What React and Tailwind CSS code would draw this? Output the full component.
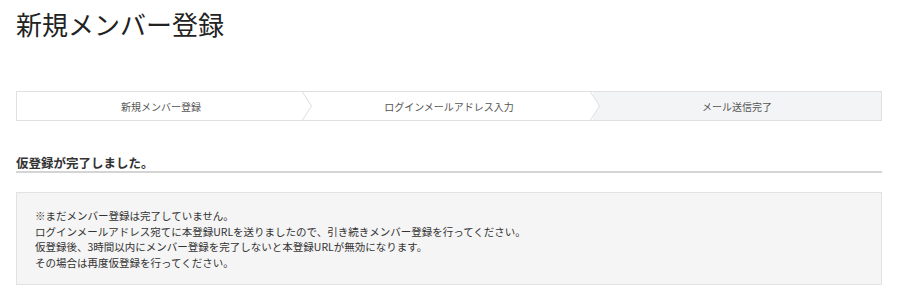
import React from 'react';

const steps = ['新規メンバー登録', 'ログインメールアドレス入力', 'メール送信完了'];

const Chevron = () => (
  <svg
    className="absolute top-0 -right-[7px] z-10"
    width="10"
    height="28"
    viewBox="0 0 10 28"
  >
    <polygon points="0,0 0.5,0 9.5,14 0.5,28 0,28" fill="#ffffff" />
    <polyline points="0.5,0 9.5,14 0.5,28" fill="none" stroke="#dedede" strokeWidth="1" />
  </svg>
);

const App = () => {
  return (
    <div
      className="w-[900px] h-[300px] bg-white overflow-hidden"
      style={{ fontFamily: '"Noto Sans CJK JP", "Noto Sans", sans-serif' }}
    >
      <div className="w-[866px] ml-4">
        {/* Page title */}
        <h1 className="pt-[7px] text-[26px] leading-[34px] text-[#222] font-normal">新規メンバー登録</h1>

        {/* Step bar */}
        <div className="mt-[50px] flex h-[30px] border border-[#e0e0e0]">
          {steps.map((label, i) => (
            <div
              key={label}
              className={`relative flex-1 flex items-center justify-center text-[10px] text-[#555] ${
                i === 2 ? 'bg-[#f3f4f6]' : 'bg-white'
              }`}
            >
              {label}
              {i < 2 && <Chevron />}
            </div>
          ))}
        </div>

        {/* Section heading */}
        <h2 className="mt-[34px] text-[12.5px] leading-[16px] font-bold text-[#333] border-b-2 border-[#d4d4d4]">
          仮登録が完了しました。
        </h2>

        {/* Notice box */}
        <div className="mt-[19px] h-[93px] bg-[#f5f5f5] border border-[#e2e2e2] pl-[18px] pt-[15px] text-[10.5px] leading-[15.6px] text-[#333]">
          <p>※まだメンバー登録は完了していません。</p>
          <p>ログインメールアドレス宛てに本登録URLを送りましたので、引き続きメンバー登録を行ってください。</p>
          <p>仮登録後、3時間以内にメンバー登録を完了しないと本登録URLが無効になります。</p>
          <p>その場合は再度仮登録を行ってください。</p>
        </div>
      </div>
    </div>
  );
};

export default App;
